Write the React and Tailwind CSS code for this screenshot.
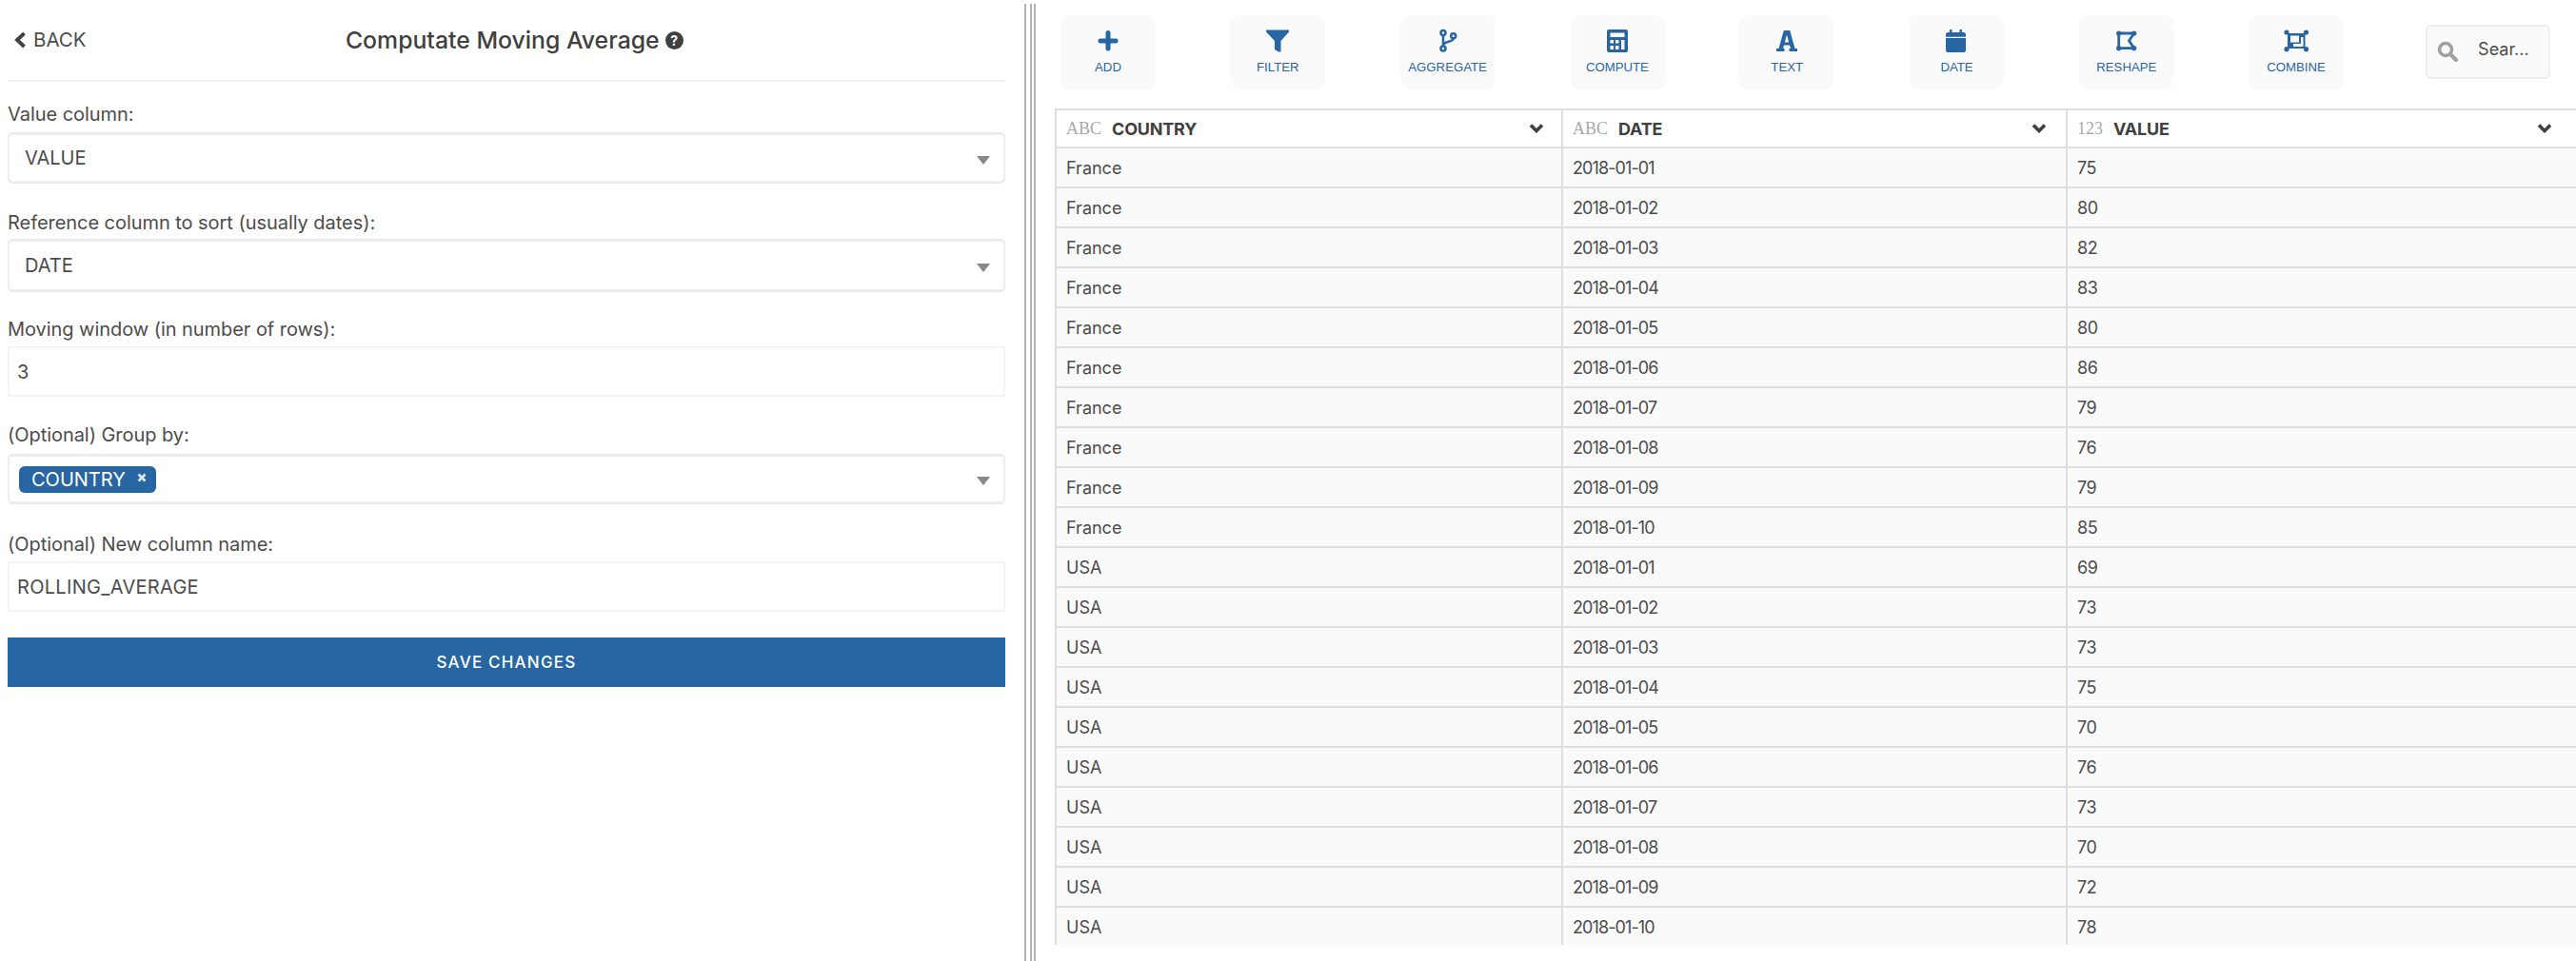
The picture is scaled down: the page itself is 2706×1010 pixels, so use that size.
import React from "react";

const font = "font-['Inter','Liberation_Sans',sans-serif]";
const rows = [
  ["France","2018-01-01",75],["France","2018-01-02",80],["France","2018-01-03",82],["France","2018-01-04",83],["France","2018-01-05",80],
  ["France","2018-01-06",86],["France","2018-01-07",79],["France","2018-01-08",76],["France","2018-01-09",79],["France","2018-01-10",85],
  ["USA","2018-01-01",69],["USA","2018-01-02",73],["USA","2018-01-03",73],["USA","2018-01-04",75],["USA","2018-01-05",70],
  ["USA","2018-01-06",76],["USA","2018-01-07",73],["USA","2018-01-08",70],["USA","2018-01-09",72],["USA","2018-01-10",78],
];
const Caret = () => <span className="w-0 h-0 border-x-[7px] border-x-transparent border-t-[9px] border-t-[#888888] mt-1" />;
const Icon = ({ children }) => <svg viewBox="0 0 32 32" className="w-8 h-8 fill-[#2866a3]">{children}</svg>;
const Dots = ({ pts }) => pts.map(([x, y]) => <circle key={x + "-" + y} cx={x} cy={y} r="2.600" />);
const icons = {
  ADD: <Icon><path d="M13.500 7.500a2.500 2.500 0 0 1 5 0V13.500H24a2.500 2.500 0 0 1 0 5H18.500V24a2.500 2.500 0 0 1-5 0V18.500H8a2.500 2.500 0 0 1 0-5H13.500Z" /></Icon>,
  FILTER: <Icon><path d="M4 4.500H28V6.500L19.500 16V27.500H17L13 25V16L4 6.500Z" /></Icon>,
  AGGREGATE: <Icon><g className="fill-none stroke-[#2866a3]" strokeWidth="2.500"><circle cx="11" cy="7.500" r="2.500" /><circle cx="11" cy="24" r="2.500" /><circle cx="21.700" cy="10.700" r="2.500" /><path d="M11 10V21.500M21.700 13.200C21.700 17.500 11 16 11 21" /></g></Icon>,
  COMPUTE: <Icon><path fillRule="evenodd" d="M7 4H25A2 2 0 0 1 27 6V26A2 2 0 0 1 25 28H7A2 2 0 0 1 5 26V6A2 2 0 0 1 7 4ZM8.500 7.500V12H23.500V7.500ZM8.500 15V18.500H12V15ZM14 15V18.500H17.500V15ZM20 15V25H23.500V15ZM8.500 21V25H12V21ZM14 21V25H17.500V21Z" /></Icon>,
  TEXT: <Icon><path fillRule="evenodd" d="M12.800 5H19.200L24.500 24H27V27H18.500V24H20L19 20.500H13L12 24H13.500V27H5V24H7.500ZM16 9.500L13.800 17.500H18.200Z" /></Icon>,
  DATE: <Icon><path d="M9 4H11.500V7H19.500V4H22V7H23.500A2.500 2.500 0 0 1 26 9.500V11.700H5V9.500A2.500 2.500 0 0 1 7.500 7H9ZM5 12.900H26V26A2 2 0 0 1 24 28H7A2 2 0 0 1 5 26Z" /></Icon>,
  RESHAPE: <Icon><path className="fill-none stroke-[#2866a3]" strokeWidth="2.800" d="M7.700 8H23.700L18.500 15.700L23.700 23.700H7.700Z" /><Dots pts={[[7.700,8],[23.700,8],[7.700,23.700],[23.700,23.700]]} /></Icon>,
  COMBINE: <Icon><path fillRule="evenodd" d="M7 8H25.500V24H7ZM10 10.500V17.500H19V10.500ZM21 12V19H13V22H23.500V12Z" /><Dots pts={[[6,7],[26.500,7],[6,24.700],[26.500,24.700]]} /></Icon>,
};
const tools = ["ADD","FILTER","AGGREGATE","COMPUTE","TEXT","DATE","RESHAPE","COMBINE"];

const Chevron = () => (
  <svg viewBox="0 0 16 11" className="ml-auto w-[16px] h-[11px] -mt-[2px] shrink-0">
    <path d="M2 2.500L8 8.500L14 2.500" className="fill-none stroke-[#404040]" strokeWidth="3.600" />
  </svg>
);
const Label = ({ children }) => <div className="text-[20px] leading-6 text-[#4c4c4c] tracking-[-0.05px]">{children}</div>;
const Select = ({ children, h }) => (
  <div className={`${h} flex items-center justify-between border-2 border-[#eeeeee] rounded-[5px] bg-white pr-[14px] pl-[16px] shadow-[0_-1px_0_#e8e8e8,0_1px_0_#e8e8e8]`}>
    <div className="text-[20px] text-[#4c4c4c] -mt-[1px]">{children}</div>
    <Caret />
  </div>
);
const Input = ({ children }) => (
  <div className="h-[53px] flex items-center border-2 border-[#f4f4f4] bg-white pl-[8px] text-[20px] text-[#4c4c4c] tracking-[0.3px]">{children}</div>
);

export default function App() {
  return (
    <div className={`${font} w-[2706px] h-[1010px] flex bg-white overflow-hidden`}>
      <div className="w-[1076px] shrink-0 pl-2 pr-5 flex flex-col">
        <div className="h-[86px] border-b-2 border-[#f0f0f0] flex items-center">
          <div className="flex items-center text-[20.500px] text-[#4c4c4c] pl-[6px] mt-[1px]">
            <svg viewBox="0 0 14 18" className="w-[14px] h-[18px] -mt-[2px]">
              <path d="M11.500 2L4 9L11.500 16" className="fill-none stroke-[#404040]" strokeWidth="3.800" />
            </svg>
            <span className="ml-[7px]">BACK</span>
          </div>
          <div className="flex-1 flex items-center justify-center pr-[66px] mt-[1px] text-[24.800px] font-medium text-[#404040]">
            <span>Computate Moving Average</span>
            <span className="ml-[6px] w-[19px] h-[19px] rounded-full bg-[#404040] text-white text-[14px] font-bold flex items-center justify-center">?</span>
          </div>
        </div>
        <div className="mt-[22px]"><Label>Value column:</Label></div>
        <div className="mt-[8px]"><Select h="h-[52px]">VALUE</Select></div>
        <div className="mt-[30px]"><Label>Reference column to sort (usually dates):</Label></div>
        <div className="mt-[6px]"><Select h="h-[54px]">DATE</Select></div>
        <div className="mt-[28px]"><Label>Moving window (in number of rows):</Label></div>
        <div className="mt-[6px]"><Input>3</Input></div>
        <div className="mt-[28px]"><Label>(Optional) Group by:</Label></div>
        <div className="mt-[9px]">
          <Select h="h-[51px]">
            <span className="-ml-[6px] mt-[3px] inline-flex items-center h-[28px] rounded-[6px] bg-[#2866a3] text-white pl-[13px] pr-[10px] text-[20px]">
              COUNTRY
              <svg viewBox="0 0 10 10" className="ml-[12px] w-[10px] h-[10px] -mt-[5px]">
                <path d="M1.500 1.500L8.500 8.500M8.500 1.500L1.500 8.500" className="fill-none stroke-[#dfe8f2]" strokeWidth="2.600" />
              </svg>
            </span>
          </Select>
        </div>
        <div className="mt-[31px]"><Label>(Optional) New column name:</Label></div>
        <div className="mt-[6px]"><Input>ROLLING_AVERAGE</Input></div>
        <div className="mt-[27px] h-[52px] pt-[2px] bg-[#2866a3] text-white flex items-center justify-center text-[17px] font-medium tracking-[1.2px]">SAVE CHANGES</div>
      </div>
      <div className="w-[12px] shrink-0 mt-[4px] border-x-2 border-[#b4b4b4] relative">
        <div className="absolute left-[4px] top-0 bottom-0 w-[2px] bg-[#b4b4b4]" />
      </div>
      <div className="flex-1 min-w-0 flex flex-col">
        <div className="flex items-start pl-[26px] pt-4 h-[114px]">
          <div className="flex gap-[78.300px]">
            {tools.map((t) => (
              <div key={t} className="w-[100px] h-[78px] rounded-[10px] bg-[#fafafa] flex flex-col items-center pt-[11px]">
                {icons[t]}
                <span className="mt-[3px] font-['Liberation_Sans',sans-serif] text-[13.200px] leading-[18px] text-[#2866a3]">{t}</span>
              </div>
            ))}
          </div>
          <div className="ml-[86px] mt-[10px] w-[131px] h-[57px] rounded-[6px] border-2 border-[#eeeeee] bg-[#fafafa] flex items-start text-[#4c4c4c] text-[18px]">
            <svg viewBox="0 0 22 22" className="w-[22px] h-[22px] ml-[10px] mt-[15px] shrink-0">
              <circle cx="9" cy="9" r="6.500" className="fill-none stroke-[#a0a0a0]" strokeWidth="3.500" />
              <path d="M14 14L20 20" className="stroke-[#a0a0a0]" strokeWidth="4" strokeLinecap="round" />
            </svg>
            <span className="ml-[21px] mt-[10px]">Sear...</span>
          </div>
        </div>
        <div className="ml-[20px] h-[879px] overflow-hidden">
          <div className="flex h-[42px] border-y-2 border-l-2 border-[#dedede] bg-white">
            {[["ABC","COUNTRY","w-[532px] pr-[18px]"],["ABC","DATE","w-[530px] pr-[20px]"],["123","VALUE","flex-1 pr-[25px]"]].map(([a,b,w]) => (
              <div key={b} className={`${w} flex items-center border-r-2 last:border-r-0 border-[#dedede] pl-[10px]`}>
                <span className="font-['Liberation_Serif',serif] text-[18px] text-[#a9a9a9] mr-[11px]">{a}</span>
                <span className="text-[18px] font-bold text-[#404040] tracking-[-0.2px]">{b}</span>
                <Chevron />
              </div>
            ))}
          </div>
          {rows.map((r, i) => (
            <div key={i} className="flex h-[42px] border-b-2 border-l-2 border-[#dedede] bg-[#fafafa] text-[18px] text-[#4c4c4c]">
              <div className="w-[532px] flex items-center border-r-2 border-[#dedede] pl-[10px]">{r[0]}</div>
              <div className="w-[530px] flex items-center border-r-2 border-[#dedede] pl-[10px] tracking-[-0.9px]">{r[1]}</div>
              <div className="flex-1 flex items-center pl-[10px] tracking-[-0.5px]">{r[2]}</div>
            </div>
          ))}
        </div>
      </div>
    </div>
  );
}
